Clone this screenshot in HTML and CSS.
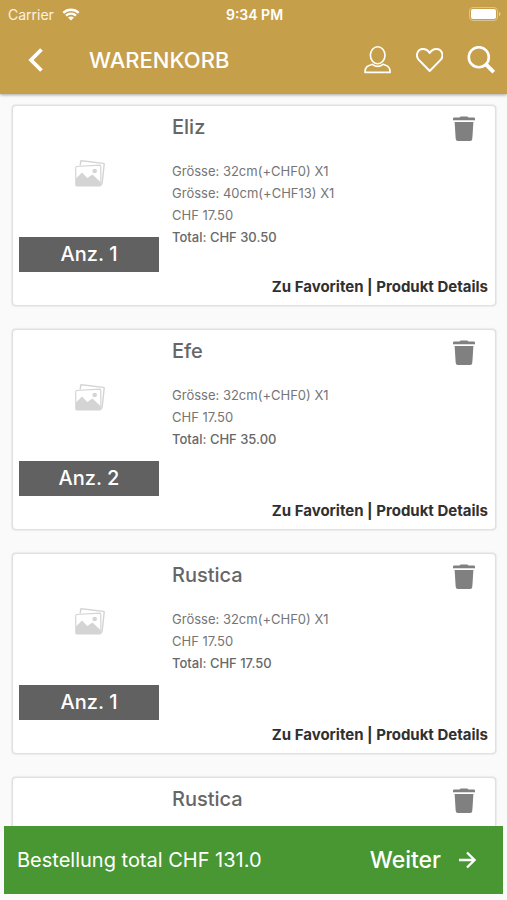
FILE: index.html
```html
<!DOCTYPE html>
<html lang="de">
<head>
<meta charset="utf-8">
<meta name="viewport" content="width=device-width, initial-scale=1">
<title>Warenkorb</title>
<link rel="stylesheet" href="styles.css">
</head>
<body>
<svg class="symbols" aria-hidden="true">
  <symbol id="trash" viewBox="0 0 22 26">
    <path d="M0 2.6Q0 1.6 1 1.6H6.6Q7.2 .4 8.2 .4H13.8Q14.8 .4 15.4 1.6H21Q22 1.6 22 2.6V4.3H0Z"/>
    <path d="M1.6 5.9H20.4L19.3 22.7Q19.1 24.9 17.2 24.9H4.8Q2.9 24.9 2.7 22.7Z"/>
  </symbol>
  <symbol id="photos" viewBox="0 0 30 28">
    <path d="M5.2 5.5L5.7 1.2Q5.8 .7 6.4 .8L28.6 3.4Q29.3 3.5 29.2 4.2L27.2 22.6Q27 24.3 25.8 25" fill="none" stroke="#d4d4d4" stroke-width="1.4"/>
    <path d="M.7 7.6Q.7 6.6 1.7 6.5L24.6 5.2Q25.8 5.2 25.8 6.3V24.7Q25.8 26 24.6 26H2Q.8 26 .8 24.8Z" fill="#fff" stroke="#d4d4d4" stroke-width="1.2"/>
    <path d="M1 18.5L7 12.6L12.2 18L17.5 14.6L25.6 22.2V26H1Z" fill="#d4d4d4"/>
    <circle cx="19.7" cy="11" r="2.3" fill="#d4d4d4"/>
  </symbol>
</svg>
<div class="app">
  <header class="header">
    <div class="status">
      <span class="carrier">Carrier
        <svg class="wifi" viewBox="0 0 18 13" aria-hidden="true"><path d="M1.3 4.8C5.6.7 12.4.7 16.7 4.8M4 7.6C6.8 5 11.2 5 14 7.6" fill="none" stroke="#fff" stroke-width="2.3"/><path d="M9 12.6L6 9.6Q9 7.2 12 9.6Z" fill="#fff"/></svg>
      </span>
      <span class="time">9:34 PM</span>
      <svg class="battery" viewBox="0 0 32 14" aria-hidden="true"><rect x=".5" y=".5" width="28" height="13" rx="3.5" fill="none" stroke="#dcc48e"/><rect x="2" y="2" width="25" height="10" rx="2" fill="#fff"/><path d="M30 4.7Q31.5 5.6 31.5 7T30 9.3Z" fill="#e3cfa3"/></svg>
    </div>
    <nav class="toolbar">
      <button class="icon-button" aria-label="Zurück"><svg class="back" viewBox="0 0 16 24" aria-hidden="true"><path d="M13.5 1.5L3 12L13.5 22.5" fill="none" stroke="currentColor" stroke-width="3.8"/></svg></button>
      <h1 class="heading">WARENKORB</h1>
      <button class="icon-button" aria-label="Konto"><svg class="tool" viewBox="0 0 28 28" aria-hidden="true"><g fill="none" stroke="currentColor" stroke-width="1.6"><ellipse cx="14.7" cy="9.3" rx="7.3" ry="8.5"/><path d="M9.4 18.3C5 19.6 2 20.3 2 26.4H27.2C27.2 20.3 24 19.6 20 18.3Q14.7 22.6 9.4 18.3Z" stroke-linejoin="round"/></g></svg></button>
      <button class="icon-button" aria-label="Favoriten"><svg class="tool" viewBox="0 0 28 28" aria-hidden="true"><path d="M14.7 25L3.6 13.6C.6 10.3 1.8 3 8 3Q12.2 3 14.7 7Q17.2 3 21.4 3C27.6 3 28.8 10.3 25.8 13.6Z" fill="none" stroke="currentColor" stroke-width="2" stroke-linejoin="round"/></svg></button>
      <button class="icon-button" aria-label="Suchen"><svg class="tool" viewBox="0 0 28 28" aria-hidden="true"><g fill="none" stroke="currentColor"><circle cx="11.8" cy="11.2" r="10" stroke-width="2.6"/><path d="M18.7 18.2L26.7 26.2" stroke-width="4"/></g></svg></button>
    </nav>
  </header>

  <main class="list">
    <article class="card">
      <div class="thumb"><div class="picture"><svg class="photo" aria-hidden="true"><use href="#photos"/></svg></div><div class="count">Anz. 1</div></div>
      <div class="details">
        <h2 class="name">Eliz</h2>
        <p>Grösse: 32cm(+CHF0) X1</p><p>Grösse: 40cm(+CHF13) X1</p><p>CHF 17.50</p><p class="total">Total: CHF 30.50</p>
      </div>
      <button class="delete" aria-label="Eliz löschen"><svg class="bin" aria-hidden="true"><use href="#trash"/></svg></button>
      <div class="actions"><a href="#">Zu Favoriten</a> | <a href="#">Produkt Details</a></div>
    </article>
    <article class="card">
      <div class="thumb"><div class="picture"><svg class="photo" aria-hidden="true"><use href="#photos"/></svg></div><div class="count">Anz. 2</div></div>
      <div class="details">
        <h2 class="name">Efe</h2>
        <p>Grösse: 32cm(+CHF0) X1</p><p>CHF 17.50</p><p class="total">Total: CHF 35.00</p>
      </div>
      <button class="delete" aria-label="Efe löschen"><svg class="bin" aria-hidden="true"><use href="#trash"/></svg></button>
      <div class="actions"><a href="#">Zu Favoriten</a> | <a href="#">Produkt Details</a></div>
    </article>
    <article class="card">
      <div class="thumb"><div class="picture"><svg class="photo" aria-hidden="true"><use href="#photos"/></svg></div><div class="count">Anz. 1</div></div>
      <div class="details">
        <h2 class="name">Rustica</h2>
        <p>Grösse: 32cm(+CHF0) X1</p><p>CHF 17.50</p><p class="total">Total: CHF 17.50</p>
      </div>
      <button class="delete" aria-label="Rustica löschen"><svg class="bin" aria-hidden="true"><use href="#trash"/></svg></button>
      <div class="actions"><a href="#">Zu Favoriten</a> | <a href="#">Produkt Details</a></div>
    </article>
    <article class="card card-last">
      <div class="details">
        <h2 class="name">Rustica</h2>
      </div>
      <button class="delete" aria-label="Rustica löschen"><svg class="bin" aria-hidden="true"><use href="#trash"/></svg></button>
    </article>
  </main>

  <footer class="checkout">
    <span class="sum">Bestellung total CHF 131.0</span>
    <button class="next">Weiter
      <svg class="arrow" viewBox="0 0 18 18" aria-hidden="true"><path d="M1 9H16M9 1.5L16.5 9L9 16.5" fill="none" stroke="currentColor" stroke-width="2.3"/></svg>
    </button>
  </footer>
</div>
</body>
</html>
```

FILE: styles.css
```css
* {
  box-sizing: border-box;
}

body {
  margin: 0;
  font-family: Inter, "Liberation Sans", sans-serif;
  background: #fafafa;
  color: #616161;
}

button {
  padding: 0;
  border: 0;
  background: none;
  color: inherit;
  font: inherit;
  cursor: pointer;
}

h1,
h2,
p {
  margin: 0;
}

a {
  color: inherit;
  text-decoration: none;
}

svg {
  display: block;
}

.symbols {
  position: absolute;
  width: 0;
  height: 0;
}

.app {
  display: flex;
  flex-direction: column;
  height: 100vh;
}

.header {
  z-index: 1;
  padding-bottom: 2px;
  background: #c69f4a;
  color: #fff;
  box-shadow: 0 1px 3px rgba(0, 0, 0, 0.35);
}

.status {
  display: grid;
  grid-template-columns: 1fr auto 1fr;
  align-items: center;
  height: 28px;
  padding: 0 6px 0 8px;
  font-size: 14px;
}

.carrier {
  display: flex;
  align-items: center;
  gap: 8px;
  color: #fbf3e0;
}

.wifi {
  width: 18px;
  height: 13px;
}

.time {
  font-weight: 600;
}

.battery {
  justify-self: end;
  width: 32px;
  height: 14px;
}

.toolbar {
  display: flex;
  align-items: center;
  gap: 24px;
  height: 64px;
  padding: 0 12px 0 28px;
}

.back {
  width: 16px;
  height: 24px;
}

.heading {
  flex: 1;
  padding-left: 21px;
  font-size: 22px;
  font-weight: 500;
}

.tool {
  width: 28px;
  height: 28px;
}

.list {
  flex: 1;
  display: flex;
  flex-direction: column;
  gap: 23px;
  min-height: 0;
  padding: 11px 11px 0 12px;
  overflow: hidden;
}

.card {
  flex: none;
  display: grid;
  grid-template-columns: 140px 1fr auto;
  grid-template-rows: 160px auto;
  column-gap: 13px;
  min-height: 201px;
  padding: 6px;
  border: 1px solid #e0e0e0;
  border-radius: 4px;
  background: #fff;
  box-shadow: 0 0 2px rgba(0, 0, 0, 0.2);
}

.card-last .details {
  grid-column: 2;
}

.thumb {
  display: flex;
  flex-direction: column;
}

.picture {
  flex: 1;
  display: grid;
  place-items: center;
  padding: 0 0 2px 2px;
}

.photo {
  width: 30px;
  height: 28px;
}

.count {
  background: #616161;
  color: #fff;
  font-size: 20px;
  font-weight: 500;
  line-height: 35px;
  text-align: center;
}

.details {
  color: #757575;
  font-size: 13px;
  line-height: 22px;
}

.name {
  margin-bottom: 17px;
  color: #666;
  font-size: 20px;
  font-weight: 500;
  line-height: 31px;
}

.total {
  color: #686868;
  font-weight: 500;
}

.delete {
  align-self: start;
  padding: 4px 14px 0 0;
}

.bin {
  width: 22px;
  height: 26px;
  fill: #808080;
}

.actions {
  grid-column: 1 / -1;
  padding: 5px 1px 0 0;
  color: #303030;
  font-size: 15px;
  font-weight: 700;
  line-height: 20px;
  text-align: right;
}

.checkout {
  display: flex;
  align-items: center;
  justify-content: space-between;
  height: 68px;
  margin: 0 4px 6px;
  padding: 0 27px 0 13px;
  background: #489733;
  color: #fff;
  font-size: 20px;
}

.next {
  display: flex;
  align-items: center;
  gap: 17px;
  font-size: 23px;
  font-weight: 500;
}

.arrow {
  width: 18px;
  height: 18px;
}
```
